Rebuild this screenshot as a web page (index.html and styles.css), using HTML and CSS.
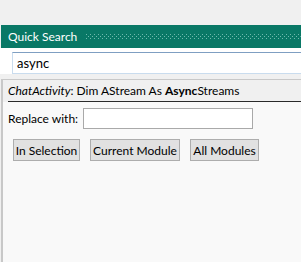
FILE: index.html
```html
<!DOCTYPE html>
<html lang="en">
<head>
  <meta charset="UTF-8">
  <title>Quick Search</title>
  <link rel="stylesheet" href="styles.css">
</head>
<body>
  <div class="window">
    <div class="titlebar">
      <span class="title">Quick Search</span>
      <svg class="grip" width="100%" height="6">
        <defs>
          <pattern id="dots" width="4" height="4" patternUnits="userSpaceOnUse">
            <rect x="0" y="0" width="1" height="1" fill="#6fb9ad"/>
            <rect x="2" y="2" width="1" height="1" fill="#6fb9ad"/>
          </pattern>
        </defs>
        <rect width="100%" height="6" fill="url(#dots)"/>
      </svg>
    </div>

    <div class="search-area">
      <input class="search-box" type="text" value="async">
    </div>

    <div class="panel">
      <div class="result-row">
        <div class="result-text"><em>ChatActivity</em>: Dim AStream As <b>Async</b>Streams</div>
      </div>

      <div class="replace-row">
        <label for="replace">Replace with:</label>
        <input id="replace" class="replace-box" type="text">
      </div>

      <div class="button-row">
        <button class="btn-selection">In Selection</button>
        <button class="btn-module">Current Module</button>
        <button class="btn-all">All Modules</button>
      </div>
    </div>
  </div>
</body>
</html>
```

FILE: styles.css
```css
* {
  box-sizing: border-box;
  margin: 0;
  padding: 0;
}

body {
  background-color: #f0f0f0;
  font-family: 'Lato', 'Open Sans', sans-serif;
  font-size: 12px;
  color: #000;
  overflow: hidden;
}

.window {
  width: 301px;
  height: 262px;
  padding-top: 25px;
  display: flex;
  flex-direction: column;
}

.titlebar {
  height: 23px;
  margin-left: 1px;
  background-color: #097866;
  display: flex;
  align-items: center;
  gap: 9px;
  padding-left: 7px;
}

.title {
  color: #fff;
  font-size: 12px;
  white-space: nowrap;
}

.grip {
  flex: 1;
  display: block;
}

.search-area {
  height: 26px;
  background-color: #fff;
  padding: 4px 0 0 12px;
  overflow: hidden;
}

.search-box {
  width: 320px;
  height: 22px;
  border: 1px solid #c9dcee;
  border-top-color: #7f9fc2;
  padding: 0 4px;
  font-family: inherit;
  font-size: 13px;
  outline: none;
}

.panel {
  flex: 1;
  margin-top: 5px;
  margin-left: 1px;
  background-color: #f9f9f9;
  border-left: 2px solid #c8c8c8;
  border-top: 1px solid #c8c8c8;
}

.result-row {
  background-color: #f0f0f0;
  padding-left: 5px;
}

.result-text {
  height: 22px;
  line-height: 21px;
  border-bottom: 1px solid #2a2a2a;
  white-space: nowrap;
}

.replace-row {
  display: flex;
  align-items: center;
  margin-top: 6px;
  padding-left: 5px;
}

.replace-row label {
  width: 75px;
  white-space: nowrap;
}

.replace-box {
  width: 170px;
  height: 21px;
  border: 1px solid #a9a9a9;
  background-color: #fff;
  outline: none;
}

.button-row {
  display: flex;
  gap: 10px;
  margin-top: 10px;
  padding-left: 10px;
}

button {
  height: 22px;
  padding: 0;
  border: 1px solid #adadad;
  background-color: #e1e1e1;
  font-family: inherit;
  font-size: 12px;
  color: #000;
  white-space: nowrap;
}

.btn-selection {
  width: 67px;
}

.btn-module {
  width: 90px;
}

.btn-all {
  width: 69px;
}
```
